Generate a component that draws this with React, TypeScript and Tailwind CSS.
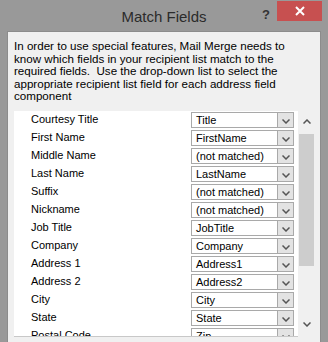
import React from 'react';

const rows: [string, string][] = [
  ['Courtesy Title', 'Title'],
  ['First Name', 'FirstName'],
  ['Middle Name', '(not matched)'],
  ['Last Name', 'LastName'],
  ['Suffix', '(not matched)'],
  ['Nickname', '(not matched)'],
  ['Job Title', 'JobTitle'],
  ['Company', 'Company'],
  ['Address 1', 'Address1'],
  ['Address 2', 'Address2'],
  ['City', 'City'],
  ['State', 'State'],
  ['Postal Code', 'Zip'],
];

function Chevron({ up = false }: { up?: boolean }) {
  return (
    <svg width="8" height="5" viewBox="0 0 8 5">
      <polyline
        points={up ? '0.5,4.5 4,1 7.5,4.5' : '0.5,0.5 4,4 7.5,0.5'}
        fill="none"
        stroke="#555555"
        strokeWidth="1.5"
      />
    </svg>
  );
}

function Combo({ value }: { value: string }) {
  return (
    <div className="flex h-[16px] w-[103px]">
      <div className="flex-1 border border-[#a9a9a9] bg-white pl-[4px] leading-[14px] text-black">
        {value}
      </div>
      <div className="w-[16px] border border-l-0 border-[#a9a9a9] bg-[#e3e3e3] flex items-end justify-center pb-[3px]">
        <Chevron />
      </div>
    </div>
  );
}

export default function App() {
  return (
    <div className="w-[328px] h-[342px] bg-[#999999] flex flex-col overflow-hidden font-['Liberation_Sans',sans-serif] text-[11px]">
      <div className="h-[31px] flex shrink-0">
        <div className="w-[73px]" />
        <div className="flex-1 text-center text-[15px] text-[#2b2b2b] pt-[6px]">Match Fields</div>
        <div className="flex items-start pt-[1px] pr-[6px]">
          <span className="w-[22px] text-center font-bold text-[13px] text-[#333] pt-[4px]">?</span>
          <div className="w-[45px] h-[20px] bg-[#c75050] flex items-center justify-center">
            <svg width="10" height="10" viewBox="0 0 10 10">
              <path d="M1 1 L9 9 M9 1 L1 9" stroke="white" strokeWidth="2" />
            </svg>
          </div>
        </div>
      </div>
      <div className="flex-1 mx-[7px] border border-b-0 border-[#8c8c8c] bg-[#f0f0f0] pl-[6px] pr-[5px] pt-[8px] flex flex-col">
        <p className="leading-[12.5px] text-[11.6px] text-black whitespace-nowrap">
          In order to use special features, Mail Merge needs to<br />
          know which fields in your recipient list match to the<br />
          required fields.&nbsp; Use the drop-down list to select the<br />
          appropriate recipient list field for each address field<br />
          component
        </p>
        <div className="mt-[8px] flex h-[226px] shrink-0">
          <div className="w-[284px] bg-white border-b border-[#c8c8c8] overflow-hidden pt-[1px] flex flex-col gap-[2px]">
            {rows.map(([label, value]) => (
              <div key={label} className="flex items-center shrink-0 h-[16px]">
                <span className="w-[177px] pl-[17px] text-black">{label}</span>
                <Combo value={value} />
              </div>
            ))}
          </div>
          <div className="w-[17px] flex flex-col">
            <div className="h-[20px] flex items-center justify-center pt-[1px]">
              <Chevron up />
            </div>
            <div className="flex-1">
              <div className="mt-[3px] mx-[1px] h-[132px] bg-[#cdcdcd]" />
            </div>
            <div className="h-[20px] flex items-center justify-center pb-[4px]">
              <Chevron />
            </div>
          </div>
        </div>
      </div>
    </div>
  );
}
